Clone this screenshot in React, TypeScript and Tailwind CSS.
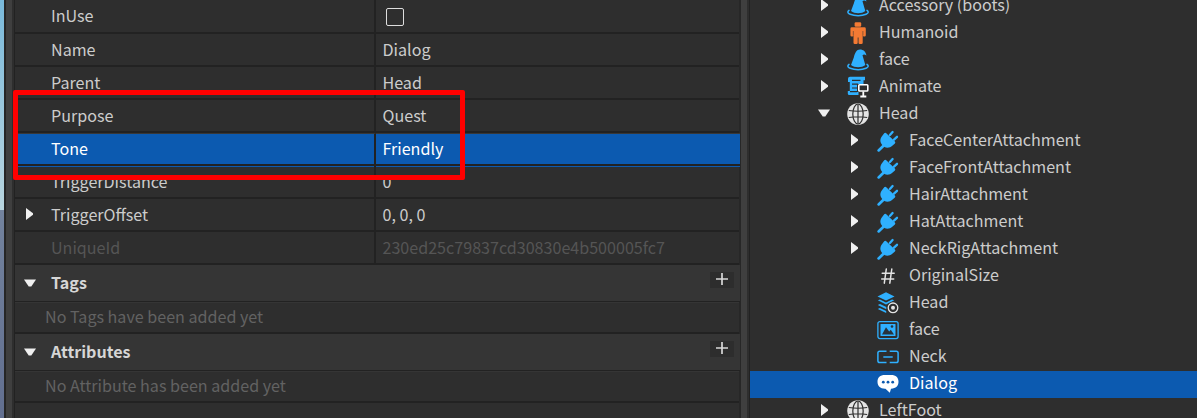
import React from "react";

type IconName = "hat" | "humanoid" | "script" | "globe" | "plug" | "hash" | "mesh" | "image" | "joint" | "dialog";

function Icon({ name }: { name: IconName }) {
  const blue = "#2fb0ff";
  return (
    <svg width="22" height="22" viewBox="0 0 22 22" fill="none" className="mb-px shrink-0 overflow-visible">
      {name === "hat" && (
        <>
          <path d="M4 16 6.800 8.500C8 4 9.500.5 13 .5c3.200 0 5.800 2 6.400 6-1.400-1-2.800-1.300-3.900-.3l2.800 9.800c-3.500 2.900-10.800 2.900-14.300 0Z" fill={blue} />
          <path d="M2 15.400C.2 16.700.5 18.200 3.200 19.300c4.500 1.900 11.500 1.900 15.800 0 2.600-1.200 2.900-2.600 1-3.900" stroke={blue} strokeWidth="1.500" strokeLinecap="round" />
        </>
      )}
      {name === "humanoid" && (
        <>
          <rect x="7.600" y=".3" width="6.600" height="4.500" rx="1.200" fill="#f47a33" />
          <path d="M4.800 5.300h12.600q1.400 0 1.400 1.400v6.500q0 1.300-1.300 1.300h-.6q-1 0-1-1.100h-.2v7.300q0 1.300-1.300 1.300h-1.700q-1.200 0-1.200-1.300v-5.300h-.8v5.300q0 1.300-1.200 1.300H7.800q-1.300 0-1.300-1.300v-7.300h-.2q0 1.100-1 1.100h-.6q-1.300 0-1.300-1.300V6.700q0-1.400 1.400-1.400Z" fill="#f47a33" />
          <path d="M6.300 9v4.500M15.900 9v4.500" stroke="#2e2e2e" strokeWidth=".5" />
        </>
      )}
      {name === "script" && (
        <>
          <path d="M3 .8h15v3.400h-1.500V8H10v8h1.500v3H2.300Q.8 19 .8 17.500V15h2V6H1V2.800Q1 .8 3 .8Z" fill={blue} />
          <path d="M5 4.300h8.500M5 8.200h6M5 12h5M3 15.700h7" stroke="#2e2e2e" strokeWidth="1.200" />
          <rect x="11.800" y="8.800" width="9" height="6.200" rx=".8" fill="#2e2e2e" stroke="#fff" strokeWidth="1.600" />
          <path d="M16.300 15.500v4.500M13.300 20.500h6" stroke="#fff" strokeWidth="1.800" />
        </>
      )}
      {name === "globe" && (
        <>
          <circle cx="11" cy="11" r="10.800" fill="#e4e4e4" />
          <path d="M11 1.500v19M1.800 7.500q9.200 1.500 18.400 0M1.800 14.500q9.200-1.500 18.400 0" stroke="#2e2e2e" strokeWidth="1.200" />
          <ellipse cx="11" cy="11" rx="5.200" ry="10" stroke="#2e2e2e" strokeWidth="1.200" />
        </>
      )}
      {name === "plug" && (
        <>
          <path d="M7.200 3.200q.9-1 1.800-.1l8.900 8.500q.9.900 0 1.800l-2.300 2c-2.600 2.400-5.400 2.800-8.200 1.600L5.200 15C3 12.500 2.800 9.500 4.400 7Z" fill={blue} />
          <path d="m15.600 2-2.700 3.100M20 6.800l-3 2.900" stroke={blue} strokeWidth="2.300" strokeLinecap="round" />
          <path d="m1.600 20.400 4.600-4.300" stroke={blue} strokeWidth="2.700" strokeLinecap="round" />
        </>
      )}
      {name === "hash" && (
        <path d="M9.300 4 7.300 18.200M14.800 4l-2 14.200M5.200 8.300h12M4.700 13.900h12" stroke="#e4e4e4" strokeWidth="1.500" strokeLinecap="round" />
      )}
      {name === "mesh" && (
        <>
          <path d="M9 .3 17.500 4.500 9 8.600.5 4.500Z" fill={blue} />
          <path d="M.8 8.300 3 7.500l6 3 6-3 2.300.8L9 12.600ZM.8 13 3 12l6.300 3v2.300ZM.8 17l2-.9 6.400 2.800v2Z" fill={blue} />
          <circle cx="16" cy="15.800" r="6" fill="#2e2e2e" />
          <circle cx="16" cy="15.800" r="4.800" stroke="#e4e4e4" strokeWidth="1.300" />
          <circle cx="16" cy="15.800" r="2" fill="#e4e4e4" />
        </>
      )}
      {name === "image" && (
        <>
          <rect x=".9" y="2.600" width="20.200" height="17" rx="2" stroke={blue} strokeWidth="1.300" />
          <rect x="3.500" y="5" width="15" height="12" rx=".6" fill={blue} />
          <path d="m5 15.500 4-7.200 3.200 4.200 1.600-1.700 3.200 4.700Z" fill="#26333d" />
          <circle cx="15" cy="7.500" r="1.300" fill="#26333d" />
        </>
      )}
      {name === "joint" && (
        <path d="M9.500 5.300H2.700q-1.800 0-1.800 1.800v7.700q0 1.800 1.800 1.800h6.800M12.700 5.300h6.600q1.800 0 1.800 1.800v7.700q0 1.800-1.800 1.800h-6.600M6.300 11h9.400" stroke={blue} strokeWidth="1.500" />
      )}
      {name === "dialog" && (
        <>
          <path d="M8 2h6c5 0 7.500 2.500 7.500 6.800 0 4.200-2.500 6.700-7.500 7l-1.200 3.900-4.300-3.900H8C3 15.600.5 13 .5 8.800.5 4.500 3 2 8 2Z" fill="#fff" />
          <circle cx="6.300" cy="9.200" r="1.400" fill="#0c5ab0" />
          <circle cx="11" cy="9.200" r="1.400" fill="#0c5ab0" />
          <circle cx="15.700" cy="9.200" r="1.400" fill="#0c5ab0" />
        </>
      )}
    </svg>
  );
}

function Arrow({ open }: { open?: boolean }) {
  return (
    <svg width="12" height="12" viewBox="0 0 12 12" className="shrink-0">
      <path d={open ? "M0 2.500h12L7.300 9.500H4.700Z" : "M3 0v12l7-5.200V5.200Z"} fill="#f0f0f0" />
    </svg>
  );
}

interface Property {
  name: string;
  value: string;
  state?: "first" | "selected" | "disabled" | "expandable";
}

const properties: Property[] = [
  { name: "InUse", value: "", state: "first" },
  { name: "Name", value: "Dialog" },
  { name: "Parent", value: "Head" },
  { name: "Purpose", value: "Quest" },
  { name: "Tone", value: "Friendly", state: "selected" },
  { name: "TriggerDistance", value: "0" },
  { name: "TriggerOffset", value: "0, 0, 0", state: "expandable" },
  { name: "UniqueId", value: "230ed25c79837cd30830e4b500005fc7", state: "disabled" },
];

function PropertyRow({ name, value, state }: Property) {
  const selected = state === "selected";
  const color = selected ? "text-white" : state === "disabled" ? "text-[#555555]" : "text-[#cccccc]";
  const bg = selected ? "border-t border-t-[#383838] bg-[#0c5ab0] pb-[3px]" : "pb-0.5";
  return (
    <div className={`flex shrink-0 border-b-2 border-[#222222] ${state === "first" ? "h-[34px]" : "h-[33px]"} ${color} ${selected ? "-mr-px shadow-[0_1px_0_#0c5ab0]" : ""}`}>
      <div className={`flex w-[361px] items-center border-r-2 border-r-[#222222] ${bg}`}>
        <div className="flex w-9 pl-2">{state === "expandable" && <Arrow />}</div>
        <span>{name}</span>
      </div>
      <div className={`flex flex-1 items-center pl-[6.500px] ${bg}`}>
        {state === "first" ? <div className="mt-1 ml-[3.500px] size-[18px] rounded-[2px] border-[1.500px] border-[#dddddd]" /> : <span>{value}</span>}
      </div>
    </div>
  );
}

function Section({ title, empty }: { title: string; empty: string }) {
  return (
    <>
      <div className="-mr-px flex h-[37px] shrink-0 items-center border-b border-[#222222] bg-[#353535] pr-1.5 font-bold text-[#d6d6d6]">
        <div className="w-9 pl-[9px]"><Arrow open /></div>
        <span className="mb-0.5 flex-1">{title}</span>
        <div className="-mt-1.5 flex h-4 w-6 items-center justify-center bg-[#2d2d2d]">
          <svg width="12" height="12" viewBox="0 0 12 12" className="-mt-0.5"><path d="M6 0v12M0 6h12" stroke="#d8d8d8" strokeWidth="1.700" /></svg>
        </div>
      </div>
      <div className="flex h-8 shrink-0 items-center border-t border-b-2 border-t-[#353535] border-b-[#222222] pb-[3px] pl-[30px] text-[#626262]">{empty}</div>
    </>
  );
}

interface Node {
  label: string;
  icon: IconName;
  depth: 0 | 1;
  arrow?: "open" | "closed";
  selected?: boolean;
}

const nodes: Node[] = [
  { label: "Accessory (boots)", icon: "hat", depth: 0, arrow: "closed" },
  { label: "Humanoid", icon: "humanoid", depth: 0, arrow: "closed" },
  { label: "face", icon: "hat", depth: 0, arrow: "closed" },
  { label: "Animate", icon: "script", depth: 0, arrow: "closed" },
  { label: "Head", icon: "globe", depth: 0, arrow: "open" },
  { label: "FaceCenterAttachment", icon: "plug", depth: 1, arrow: "closed" },
  { label: "FaceFrontAttachment", icon: "plug", depth: 1, arrow: "closed" },
  { label: "HairAttachment", icon: "plug", depth: 1, arrow: "closed" },
  { label: "HatAttachment", icon: "plug", depth: 1, arrow: "closed" },
  { label: "NeckRigAttachment", icon: "plug", depth: 1, arrow: "closed" },
  { label: "OriginalSize", icon: "hash", depth: 1 },
  { label: "Head", icon: "mesh", depth: 1 },
  { label: "face", icon: "image", depth: 1 },
  { label: "Neck", icon: "joint", depth: 1 },
  { label: "Dialog", icon: "dialog", depth: 1, selected: true },
  { label: "LeftFoot", icon: "globe", depth: 0, arrow: "closed" },
];

function TreeRow({ label, icon, depth, arrow, selected }: Node) {
  return (
    <div className={`flex h-[27px] shrink-0 items-center ${depth ? "pl-[98px]" : "pl-[68px]"} ${selected ? "bg-[#0c5ab0] text-white" : "text-[#cccccc]"}`}>
      <div className="mb-[3px] flex w-[29px]">{arrow && <Arrow open={arrow === "open"} />}</div>
      <Icon name={icon} />
      <span className="mb-[5px] ml-2.5">{label}</span>
    </div>
  );
}

export default function App() {
  return (
    <div className="relative flex h-[418px] w-[1197px] overflow-hidden bg-[#2e2e2e] font-['Noto_Sans_CJK_SC','Noto_Sans',sans-serif] text-[16.1px] leading-6 whitespace-nowrap">
      <div className="flex w-1 flex-col">
        <div className="h-[210px] bg-linear-to-b from-[#79b9db] to-[#b9d5df]" />
        <div className="flex-1 bg-linear-to-b from-[#73839e] to-[#626f90]" />
      </div>
      <div className="w-2 border-l-2 border-[#262626] bg-[#3f3f3f]" />
      <div className="ml-0.5 flex w-[727px] flex-col border-r-2 border-l border-r-[#272727] border-l-[#222222]">
        {properties.map((p) => <PropertyRow key={p.name} {...p} />)}
        <Section title="Tags" empty="No Tags have been added yet" />
        <Section title="Attributes" empty="No Attribute has been added yet" />
      </div>
      <div className="w-1.5 bg-[#3f3f3f]" />
      <div className="ml-0.5 w-px bg-[#222222]" />
      <div className="-mt-[7px] flex flex-1 flex-col">
        {nodes.map((n, i) => <TreeRow key={i} {...n} />)}
      </div>
      <div className="absolute top-[90px] left-[13px] h-[90px] w-[452px] rounded-[2px] border-[5px] border-[#ff0000]" />
    </div>
  );
}
